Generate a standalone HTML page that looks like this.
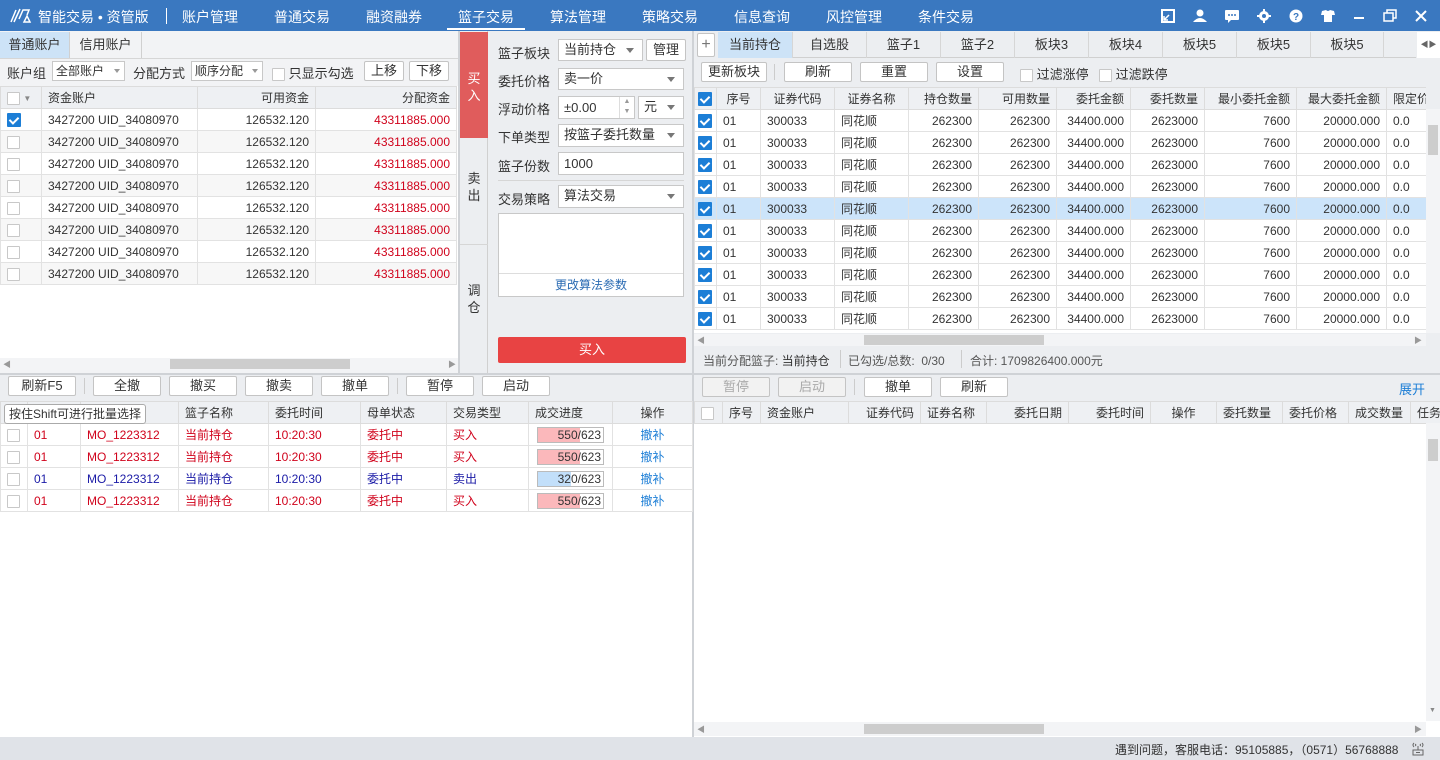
<!DOCTYPE html>
<html><head><meta charset="utf-8">
<style>
*{box-sizing:border-box;margin:0;padding:0}
body{width:1440px;height:760px;overflow:hidden;background:#eceef1;font-family:"Liberation Sans","Noto Sans CJK SC",sans-serif;font-size:12px;color:#333;position:relative}
.a{position:absolute}
.top{left:0;top:0;width:1440px;height:31px;background:#3a78c0;color:#fff}
.top .m{position:absolute;top:7px;font-size:14px;width:92px;text-align:center}
.btn{position:absolute;height:20px;border:1px solid #c4c4c4;background:#fff;border-radius:2px;text-align:center;line-height:18px;font-size:13px;color:#333}
.sel{position:absolute;height:22px;border:1px solid #c8c8c8;background:#fff;padding-left:5px;line-height:20px;font-size:13px}
.sel:after{content:"";position:absolute;right:8px;top:8px;border:4px solid transparent;border-top:5px solid #777}
.sel.s{font-size:12px;padding-left:3px}
.sel.s:after{right:4px;top:7px;border-width:3px;border-top-width:4px;border-top-color:#999}
.inp{position:absolute;height:23px;border:1px solid #c8c8c8;background:#fff;padding-left:5px;line-height:21px;font-size:13px}
.cb{display:inline-block;width:13px;height:13px;border:1px solid #c8c8c8;background:#fff;vertical-align:middle;border-radius:1px}
.ck{display:inline-block;width:14px;height:14px;background:#1c7ed6;vertical-align:middle;position:relative;border-radius:1px}
.ck:after{content:"";position:absolute;left:4px;top:2px;width:4px;height:7px;border:solid #fff;border-width:0 2px 2px 0;transform:rotate(45deg)}
table{border-collapse:collapse;table-layout:fixed;position:absolute}
td{height:22px;border:1px solid #e2e2e2;padding:0 6px;white-space:nowrap;overflow:hidden;font-size:12px}
tr.h td{background:#eef0f3;color:#333;font-size:12px;border-color:#dcdcdc}
.r{text-align:right}.c{text-align:center}
.red{color:#d0021b}.blu{color:#1a1aa6}.lk{color:#1c7ed6}
.sb{position:absolute;height:12px;background:#f3f4f6}
.sbt{position:absolute;height:10px;top:1px;background:#cdcdcd}
</style></head><body>

<div class="a top">
 <svg class="a" style="left:9px;top:7px" width="24" height="17" viewBox="0 0 24 17"><path d="M2 15 L7 3 M5 15 L11 2 M10 12 L14 3 L20 3 L18 8 M15 15 L18 9 L21 15 Z" stroke="#fff" stroke-width="1.5" fill="none"/></svg>
 <div class="a" style="left:38px;top:7px;font-size:14px">智能交易 • 资管版</div>
 <div class="a" style="left:166px;top:8px;width:1px;height:16px;background:#fff"></div>
 <div class="m" style="left:164px">账户管理</div>
 <div class="m" style="left:256px">普通交易</div>
 <div class="m" style="left:348px">融资融券</div>
 <div class="m" style="left:440px">篮子交易</div>
 <div class="a" style="left:447px;top:28px;width:78px;height:2px;background:#fff"></div>
 <div class="m" style="left:532px">算法管理</div>
 <div class="m" style="left:624px">策略交易</div>
 <div class="m" style="left:716px">信息查询</div>
 <div class="m" style="left:808px">风控管理</div>
 <div class="m" style="left:900px">条件交易</div>
 <svg class="a" style="left:1160px;top:8px" width="276" height="16" viewBox="0 0 276 16" fill="#fff">
  <rect x="2" y="2" width="12" height="12" fill="none" stroke="#fff" stroke-width="2"/><path d="M4 12 L9 7 M4 8 V12 H8" stroke="#fff" stroke-width="1.5" fill="none"/>
  <circle cx="40" cy="5" r="3.5"/><path d="M33 14 Q40 6 47 14Z"/>
  <rect x="65" y="2" width="14" height="10" rx="1"/><path d="M68 12 L68 15 L71 12Z"/><circle cx="69" cy="7" r="1" fill="#3a78c0"/><circle cx="72" cy="7" r="1" fill="#3a78c0"/><circle cx="75" cy="7" r="1" fill="#3a78c0"/>
  <circle cx="104" cy="8" r="5"/><circle cx="104" cy="8" r="2" fill="#3a78c0"/><path d="M103 1h2v3h-2zM103 12h2v3h-2zM97 7h3v2h-3zM108 7h3v2h-3z"/>
  <circle cx="136" cy="8" r="6.5"/><text x="136" y="12" font-size="10" font-weight="bold" text-anchor="middle" fill="#3a78c0" font-family="Liberation Sans">?</text>
  <path d="M162 3 L166 2 Q168 4 170 2 L174 3 L175 7 L172 7 L172 14 L164 14 L164 7 L161 7Z"/>
  <rect x="194" y="9" width="10" height="2"/>
  <rect x="224" y="5" width="9" height="8" fill="none" stroke="#fff" stroke-width="1.5"/><path d="M227 5 V2 H236 V10 H233" fill="none" stroke="#fff" stroke-width="1.5"/>
  <path d="M256 3 L266 13 M266 3 L256 13" stroke="#fff" stroke-width="2"/>
 </svg>
</div>

<!-- LEFT TOP -->
<div class="a" style="left:0;top:31px;width:458px;height:342px;background:#f2f3f5"></div>
<div class="a" style="left:0;top:32px;width:70px;height:26px;background:#cde3f7;border-right:1px solid #d0d0d0;line-height:26px;text-align:center;font-size:13px">普通账户</div>
<div class="a" style="left:70px;top:32px;width:72px;height:26px;border-right:1px solid #d0d0d0;line-height:26px;text-align:center;font-size:13px">信用账户</div>
<div class="a" style="left:0;top:58px;width:458px;height:1px;background:#d6d6d6"></div>
<div class="a" style="left:7px;top:63px;font-size:13px">账户组</div>
<div class="sel s" style="left:52px;top:61px;width:73px;height:20px;line-height:18px">全部账户</div>
<div class="a" style="left:133px;top:63px;font-size:13px">分配方式</div>
<div class="sel s" style="left:191px;top:61px;width:72px;height:20px;line-height:18px">顺序分配</div>
<div class="a" style="left:272px;top:63px;font-size:13px"><span class="cb"></span> 只显示勾选</div>
<div class="btn" style="left:364px;top:61px;width:40px">上移</div>
<div class="btn" style="left:409px;top:61px;width:40px">下移</div>
<div class="a" style="left:0;top:86px;width:458px;height:272px;background:#fff"></div>
<table style="left:0;top:86px;width:456px">
<colgroup><col style="width:41px"><col style="width:156px"><col style="width:118px"><col style="width:141px"></colgroup>
<tr class="h"><td><span class="cb"></span> <span style="font-size:8px;color:#888">▼</span></td><td>资金账户</td><td class="r">可用资金</td><td class="r">分配资金</td></tr>
<tr><td><span class="ck"></span></td><td>3427200 UID_34080970</td><td class="r">126532.120</td><td class="r red">43311885.000</td></tr>
<tr style="background:#f7f7f7"><td><span class="cb"></span></td><td>3427200 UID_34080970</td><td class="r">126532.120</td><td class="r red">43311885.000</td></tr>
<tr><td><span class="cb"></span></td><td>3427200 UID_34080970</td><td class="r">126532.120</td><td class="r red">43311885.000</td></tr>
<tr style="background:#f7f7f7"><td><span class="cb"></span></td><td>3427200 UID_34080970</td><td class="r">126532.120</td><td class="r red">43311885.000</td></tr>
<tr><td><span class="cb"></span></td><td>3427200 UID_34080970</td><td class="r">126532.120</td><td class="r red">43311885.000</td></tr>
<tr style="background:#f7f7f7"><td><span class="cb"></span></td><td>3427200 UID_34080970</td><td class="r">126532.120</td><td class="r red">43311885.000</td></tr>
<tr><td><span class="cb"></span></td><td>3427200 UID_34080970</td><td class="r">126532.120</td><td class="r red">43311885.000</td></tr>
<tr style="background:#f7f7f7"><td><span class="cb"></span></td><td>3427200 UID_34080970</td><td class="r">126532.120</td><td class="r red">43311885.000</td></tr>
</table>
<div class="sb" style="left:0;top:358px;width:458px"></div>
<div class="sbt" style="left:170px;top:359px;width:180px"></div>
<div class="a" style="left:3px;top:359px;font-size:8px;color:#999">◀</div>
<div class="a" style="left:448px;top:359px;font-size:8px;color:#999">▶</div>

<!-- MIDDLE -->
<div class="a" style="left:458px;top:31px;width:2px;height:342px;background:#cfd2d6"></div>
<div class="a" style="left:460px;top:31px;width:28px;height:342px;background:#eceef1;border-right:1px solid #d0d0d0"></div>
<div class="a" style="left:460px;top:32px;width:28px;height:106px;background:#e05c5c;color:#fff;font-size:13px;text-align:center;padding-top:38px;line-height:17px">买<br>入</div>
<div class="a" style="left:460px;top:170px;width:28px;text-align:center;font-size:13px;line-height:17px">卖<br>出</div>
<div class="a" style="left:460px;top:244px;width:28px;height:1px;background:#d6d6d6"></div>
<div class="a" style="left:460px;top:282px;width:28px;text-align:center;font-size:13px;line-height:17px">调<br>仓</div>
<div class="a" style="left:498px;top:43px;font-size:13px">篮子板块</div>
<div class="sel" style="left:558px;top:39px;width:85px">当前持仓</div>
<div class="btn" style="left:646px;top:39px;width:40px;height:22px;line-height:20px">管理</div>
<div class="a" style="left:498px;top:71px;font-size:13px">委托价格</div>
<div class="sel" style="left:558px;top:68px;width:126px">卖一价</div>
<div class="a" style="left:498px;top:99px;font-size:13px">浮动价格</div>
<div class="inp" style="left:558px;top:96px;width:77px">±0.00<span class="a" style="left:60px;top:0;width:15px;height:21px;border-left:1px solid #ddd;font-size:7px;color:#999;line-height:10px;text-align:center">▲<br>▼</span></div>
<div class="sel" style="left:638px;top:96px;width:46px;height:23px">元</div>
<div class="a" style="left:498px;top:127px;font-size:13px">下单类型</div>
<div class="sel" style="left:558px;top:124px;width:126px;height:23px">按篮子委托数量</div>
<div class="a" style="left:498px;top:156px;font-size:13px">篮子份数</div>
<div class="inp" style="left:558px;top:152px;width:126px">1000</div>
<div class="a" style="left:498px;top:180px;width:186px;height:1px;background:#d6d6d6"></div>
<div class="a" style="left:498px;top:189px;font-size:13px">交易策略</div>
<div class="sel" style="left:558px;top:185px;width:126px;height:23px">算法交易</div>
<div class="a" style="left:498px;top:213px;width:186px;height:84px;border:1px solid #c8c8c8;background:#fff"></div>
<div class="a" style="left:499px;top:273px;width:184px;height:23px;border-top:1px solid #ddd;background:#fff;text-align:center;line-height:23px;color:#2a6bb3">更改算法参数</div>
<div class="a" style="left:498px;top:337px;width:188px;height:26px;background:#e84343;border-radius:2px;color:#fff;text-align:center;line-height:26px;font-size:13px">买入</div>
<div class="a" style="left:692px;top:31px;width:2px;height:706px;background:#cfd2d6"></div>

<!-- RIGHT TOP -->
<div class="a" style="left:694px;top:31px;width:746px;height:342px;background:#eceef1"></div>
<div class="btn" style="left:697px;top:33px;width:18px;height:24px;line-height:22px;font-size:16px;color:#777">+</div>
<div class="a" style="left:718px;top:32px;width:698px;height:26px;border-bottom:1px solid #d0d0d0;font-size:13px;line-height:26px">
 <div class="a" style="left:0;width:74px;text-align:center;background:#cde3f7">当前持仓</div>
 <div class="a" style="left:74px;width:74px;text-align:center;border-left:1px solid #d6d6d6">自选股</div>
 <div class="a" style="left:148px;width:74px;text-align:center;border-left:1px solid #d6d6d6">篮子1</div>
 <div class="a" style="left:222px;width:74px;text-align:center;border-left:1px solid #d6d6d6">篮子2</div>
 <div class="a" style="left:296px;width:74px;text-align:center;border-left:1px solid #d6d6d6">板块3</div>
 <div class="a" style="left:370px;width:74px;text-align:center;border-left:1px solid #d6d6d6">板块4</div>
 <div class="a" style="left:444px;width:74px;text-align:center;border-left:1px solid #d6d6d6">板块5</div>
 <div class="a" style="left:518px;width:74px;text-align:center;border-left:1px solid #d6d6d6">板块5</div>
 <div class="a" style="left:592px;width:74px;text-align:center;border-left:1px solid #d6d6d6;border-right:1px solid #d6d6d6">板块5</div>
</div>
<div class="a" style="left:1417px;top:32px;width:23px;height:26px;background:#fff;font-size:8px;color:#666;line-height:26px;text-align:center">◀▶</div>
<div class="btn" style="left:701px;top:62px;width:66px">更新板块</div>
<div class="a" style="left:774px;top:64px;width:1px;height:16px;background:#ccc"></div>
<div class="btn" style="left:784px;top:62px;width:68px">刷新</div>
<div class="btn" style="left:860px;top:62px;width:68px">重置</div>
<div class="btn" style="left:936px;top:62px;width:68px">设置</div>
<div class="a" style="left:1020px;top:64px;font-size:13px"><span class="cb"></span> 过滤涨停</div>
<div class="a" style="left:1099px;top:64px;font-size:13px"><span class="cb"></span> 过滤跌停</div>
<div class="a" style="left:694px;top:87px;width:732px;height:246px;background:#fff;overflow:hidden">
<table style="left:0;top:0;width:760px">
<colgroup><col style="width:22px"><col style="width:44px"><col style="width:74px"><col style="width:74px"><col style="width:70px"><col style="width:78px"><col style="width:74px"><col style="width:74px"><col style="width:92px"><col style="width:90px"><col style="width:68px"></colgroup>
<tr class="h"><td style="padding:0 3px"><span class="ck"></span></td><td class="c">序号</td><td class="c">证券代码</td><td class="c">证券名称</td><td class="r">持仓数量</td><td class="r">可用数量</td><td class="r lk">委托金额</td><td class="r lk">委托数量</td><td class="r lk">最小委托金额</td><td class="r lk">最大委托金额</td><td class="lk">限定价格</td></tr>
<tr><td style="padding:0 3px"><span class="ck"></span></td><td>01</td><td>300033</td><td>同花顺</td><td class="r">262300</td><td class="r">262300</td><td class="r">34400.000</td><td class="r">2623000</td><td class="r">7600</td><td class="r">20000.000</td><td>0.0</td></tr>
<tr><td style="padding:0 3px"><span class="ck"></span></td><td>01</td><td>300033</td><td>同花顺</td><td class="r">262300</td><td class="r">262300</td><td class="r">34400.000</td><td class="r">2623000</td><td class="r">7600</td><td class="r">20000.000</td><td>0.0</td></tr>
<tr><td style="padding:0 3px"><span class="ck"></span></td><td>01</td><td>300033</td><td>同花顺</td><td class="r">262300</td><td class="r">262300</td><td class="r">34400.000</td><td class="r">2623000</td><td class="r">7600</td><td class="r">20000.000</td><td>0.0</td></tr>
<tr><td style="padding:0 3px"><span class="ck"></span></td><td>01</td><td>300033</td><td>同花顺</td><td class="r">262300</td><td class="r">262300</td><td class="r">34400.000</td><td class="r">2623000</td><td class="r">7600</td><td class="r">20000.000</td><td>0.0</td></tr>
<tr style="background:#cce4fa"><td style="padding:0 3px"><span class="ck"></span></td><td>01</td><td>300033</td><td>同花顺</td><td class="r">262300</td><td class="r">262300</td><td class="r">34400.000</td><td class="r">2623000</td><td class="r">7600</td><td class="r">20000.000</td><td>0.0</td></tr>
<tr><td style="padding:0 3px"><span class="ck"></span></td><td>01</td><td>300033</td><td>同花顺</td><td class="r">262300</td><td class="r">262300</td><td class="r">34400.000</td><td class="r">2623000</td><td class="r">7600</td><td class="r">20000.000</td><td>0.0</td></tr>
<tr><td style="padding:0 3px"><span class="ck"></span></td><td>01</td><td>300033</td><td>同花顺</td><td class="r">262300</td><td class="r">262300</td><td class="r">34400.000</td><td class="r">2623000</td><td class="r">7600</td><td class="r">20000.000</td><td>0.0</td></tr>
<tr><td style="padding:0 3px"><span class="ck"></span></td><td>01</td><td>300033</td><td>同花顺</td><td class="r">262300</td><td class="r">262300</td><td class="r">34400.000</td><td class="r">2623000</td><td class="r">7600</td><td class="r">20000.000</td><td>0.0</td></tr>
<tr><td style="padding:0 3px"><span class="ck"></span></td><td>01</td><td>300033</td><td>同花顺</td><td class="r">262300</td><td class="r">262300</td><td class="r">34400.000</td><td class="r">2623000</td><td class="r">7600</td><td class="r">20000.000</td><td>0.0</td></tr>
<tr><td style="padding:0 3px"><span class="ck"></span></td><td>01</td><td>300033</td><td>同花顺</td><td class="r">262300</td><td class="r">262300</td><td class="r">34400.000</td><td class="r">2623000</td><td class="r">7600</td><td class="r">20000.000</td><td>0.0</td></tr>
</table></div>
<div class="a" style="left:1426px;top:109px;width:14px;height:224px;background:#f3f4f6"><div class="a" style="left:2px;top:16px;width:10px;height:30px;background:#cdcdcd"></div></div>
<div class="sb" style="left:694px;top:334px;width:732px;background:#f3f4f6"></div>
<div class="sbt" style="left:864px;top:335px;width:180px"></div>
<div class="a" style="left:697px;top:335px;font-size:8px;color:#999">◀</div>
<div class="a" style="left:1414px;top:335px;font-size:8px;color:#999">▶</div>
<div class="a" style="left:703px;top:352px;color:#555">当前分配篮子: <span style="color:#333">当前持仓</span></div>
<div class="a" style="left:840px;top:350px;width:1px;height:18px;background:#ccc"></div>
<div class="a" style="left:848px;top:352px;color:#555">已勾选/总数: &nbsp;0/30</div>
<div class="a" style="left:961px;top:350px;width:1px;height:18px;background:#ccc"></div>
<div class="a" style="left:970px;top:352px;color:#555">合计: 1709826400.000元</div>

<div class="a" style="left:0;top:373px;width:1440px;height:2px;background:#cfd2d6"></div>

<!-- BOTTOM LEFT -->
<div class="a" style="left:0;top:375px;width:692px;height:26px;background:#eceef1"></div>
<div class="btn" style="left:8px;top:376px;width:68px">刷新F5</div>
<div class="a" style="left:84px;top:378px;width:1px;height:16px;background:#ccc"></div>
<div class="btn" style="left:93px;top:376px;width:68px">全撤</div>
<div class="btn" style="left:169px;top:376px;width:68px">撤买</div>
<div class="btn" style="left:245px;top:376px;width:68px">撤卖</div>
<div class="btn" style="left:321px;top:376px;width:68px">撤单</div>
<div class="a" style="left:397px;top:378px;width:1px;height:16px;background:#ccc"></div>
<div class="btn" style="left:406px;top:376px;width:68px">暂停</div>
<div class="btn" style="left:482px;top:376px;width:68px">启动</div>
<div class="a" style="left:0;top:401px;width:692px;height:336px;background:#fff"></div>
<table style="left:0;top:401px;width:692px">
<colgroup><col style="width:27px"><col style="width:53px"><col style="width:98px"><col style="width:90px"><col style="width:92px"><col style="width:86px"><col style="width:82px"><col style="width:84px"><col style="width:80px"></colgroup>
<tr class="h"><td></td><td></td><td></td><td>篮子名称</td><td>委托时间</td><td>母单状态</td><td>交易类型</td><td>成交进度</td><td class="c">操作</td></tr>
<tr class="red"><td style="padding:0 6px"><span class="cb"></span></td><td>01</td><td>MO_1223312</td><td>当前持仓</td><td>10:20:30</td><td>委托中</td><td>买入</td><td style="padding:0 8px"><div style="position:relative;height:16px;border:1px solid #bbb;background:#fff;color:#333;text-align:right;line-height:14px;padding-right:2px"><div class="a" style="left:0;top:0;width:64%;height:14px;background:#fbb8bb"></div><span style="position:relative">550/623</span></div></td><td class="c lk">撤补</td></tr>
<tr class="red"><td style="padding:0 6px"><span class="cb"></span></td><td>01</td><td>MO_1223312</td><td>当前持仓</td><td>10:20:30</td><td>委托中</td><td>买入</td><td style="padding:0 8px"><div style="position:relative;height:16px;border:1px solid #bbb;background:#fff;color:#333;text-align:right;line-height:14px;padding-right:2px"><div class="a" style="left:0;top:0;width:64%;height:14px;background:#fbb8bb"></div><span style="position:relative">550/623</span></div></td><td class="c lk">撤补</td></tr>
<tr class="blu"><td style="padding:0 6px"><span class="cb"></span></td><td>01</td><td>MO_1223312</td><td>当前持仓</td><td>10:20:30</td><td>委托中</td><td>卖出</td><td style="padding:0 8px"><div style="position:relative;height:16px;border:1px solid #bbb;background:#fff;color:#333;text-align:right;line-height:14px;padding-right:2px"><div class="a" style="left:0;top:0;width:50%;height:14px;background:#c2dffa"></div><span style="position:relative">320/623</span></div></td><td class="c lk">撤补</td></tr>
<tr class="red"><td style="padding:0 6px"><span class="cb"></span></td><td>01</td><td>MO_1223312</td><td>当前持仓</td><td>10:20:30</td><td>委托中</td><td>买入</td><td style="padding:0 8px"><div style="position:relative;height:16px;border:1px solid #bbb;background:#fff;color:#333;text-align:right;line-height:14px;padding-right:2px"><div class="a" style="left:0;top:0;width:64%;height:14px;background:#fbb8bb"></div><span style="position:relative">550/623</span></div></td><td class="c lk">撤补</td></tr>
</table>
<div class="a" style="left:4px;top:404px;height:20px;padding:0 4px;border:1px solid #aaa;border-radius:3px;background:#fff;line-height:18px;font-size:12px">按住Shift可进行批量选择</div>

<!-- BOTTOM RIGHT -->
<div class="a" style="left:694px;top:375px;width:746px;height:26px;background:#eceef1"></div>
<div class="btn" style="left:702px;top:377px;width:68px;color:#aaa;background:#f2f2f2">暂停</div>
<div class="btn" style="left:778px;top:377px;width:68px;color:#aaa;background:#f2f2f2">启动</div>
<div class="a" style="left:854px;top:379px;width:1px;height:16px;background:#ccc"></div>
<div class="btn" style="left:864px;top:377px;width:68px">撤单</div>
<div class="btn" style="left:940px;top:377px;width:68px">刷新</div>
<div class="a lk" style="left:1399px;top:379px;font-size:13px">展开</div>
<div class="a" style="left:694px;top:401px;width:746px;height:336px;background:#fff;overflow:hidden">
<table style="left:0;top:0;width:760px">
<colgroup><col style="width:28px"><col style="width:38px"><col style="width:88px"><col style="width:72px"><col style="width:66px"><col style="width:82px"><col style="width:82px"><col style="width:66px"><col style="width:66px"><col style="width:66px"><col style="width:62px"><col style="width:44px"></colgroup>
<tr class="h"><td><span class="cb"></span></td><td>序号</td><td>资金账户</td><td class="r">证券代码</td><td>证券名称</td><td class="r">委托日期</td><td class="r">委托时间</td><td class="c">操作</td><td>委托数量</td><td>委托价格</td><td>成交数量</td><td>任务</td></tr>
</table></div>
<div class="a" style="left:1426px;top:423px;width:14px;height:298px;background:#f3f4f6"><div class="a" style="left:2px;top:16px;width:10px;height:22px;background:#cdcdcd"></div><div class="a" style="left:3px;top:284px;font-size:7px;color:#888">▼</div></div>
<div class="sb" style="left:694px;top:722px;width:732px;height:14px"></div>
<div class="sbt" style="left:864px;top:724px;width:180px"></div>
<div class="a" style="left:697px;top:724px;font-size:8px;color:#999">◀</div>
<div class="a" style="left:1414px;top:724px;font-size:8px;color:#999">▶</div>

<!-- STATUS -->
<div class="a" style="left:0;top:737px;width:1440px;height:23px;background:#e0e3e8"></div>
<div class="a" style="left:1115px;top:741px;font-size:12px;color:#333">遇到问题，客服电话：95105885，（0571）56768888</div>
<svg class="a" style="left:1411px;top:742px" width="14" height="14" viewBox="0 0 14 14"><path d="M3 1 Q1 3 3 5 M11 1 Q13 3 11 5 M5 2 Q4 3 5 4 M9 2 Q10 3 9 4 M7 4 V8 M2 8 H12 V13 H2Z M5 10.5 H9" stroke="#666" fill="none"/></svg>
</body></html>
